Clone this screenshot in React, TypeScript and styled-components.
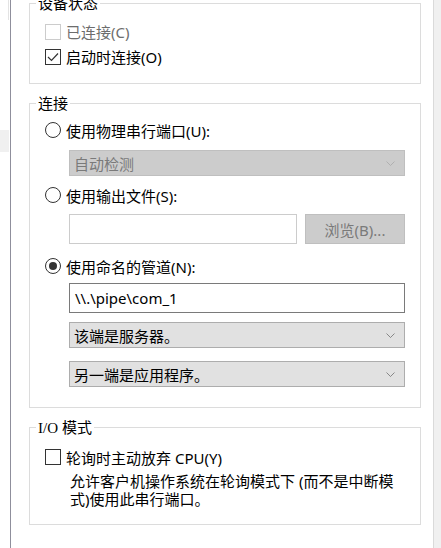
import styled, { createGlobalStyle } from "styled-components";

const GlobalStyle = createGlobalStyle`
  html, body {
    margin: 0;
    padding: 0;
    background: #ffffff;
  }
  body {
    font-family: "Noto Sans", "Noto Sans CJK SC", sans-serif;
    font-size: 15px;
    color: #000;
  }
`;

const Page = styled.div`
  display: flex;
  width: 441px;
  height: 548px;
  overflow: hidden;
`;

const LeftStrip = styled.div`
  width: 10px;
  display: flex;
  flex-direction: column;
`;

const StripLine = styled.div`
  width: 9px;
  height: 20px;
  border-right: 1px solid #e3e3e3;
  box-sizing: border-box;
`;

const StripTab = styled.div`
  width: 9px;
  height: 22px;
  margin-top: 110px;
  background: #f0f0f0;
`;

const Divider = styled.div`
  width: 1px;
  background: #8f8f9c;
`;

const Content = styled.div`
  flex: 1;
  padding-left: 18px;
  display: flex;
  flex-direction: column;
  gap: 9px;
`;

const RightEdge = styled.div`
  width: 7px;
  background: #f0f0f0;
  border-left: 1px solid #dadada;
`;

const Group = styled.fieldset<{ $first?: boolean }>`
  width: 392px;
  box-sizing: border-box;
  margin: ${(p) => (p.$first ? "-7px" : "0")} 0 0 0;
  padding: 0;
  border: 1px solid #dcdcdc;
  min-width: 0;
`;

const Legend = styled.legend`
  margin-left: 6px;
  padding: 0 2px;
  line-height: 20px;
  font-size: 15px;
`;

const Serif = styled.span`
  font-family: "Liberation Serif", serif;
`;

const GroupBody = styled.div<{ $top: number; $bottom: number }>`
  padding: ${(p) => p.$top}px 15px ${(p) => p.$bottom}px 15px;
  display: flex;
  flex-direction: column;
`;

const OptionRow = styled.label<{ $mt?: number; $h?: number; $disabled?: boolean }>`
  display: flex;
  align-items: center;
  gap: 5px;
  height: ${(p) => p.$h ?? 25}px;
  margin-top: ${(p) => p.$mt ?? 0}px;
  color: ${(p) => (p.$disabled ? "#6d6d6d" : "#000")};
  white-space: nowrap;
`;

const Box = styled.span<{ $disabled?: boolean }>`
  width: 16px;
  height: 16px;
  box-sizing: border-box;
  border: 1px solid ${(p) => (p.$disabled ? "#cccccc" : "#333333")};
  background: #fff;
  display: flex;
  align-items: center;
  justify-content: center;
  flex-shrink: 0;
`;

const Radio = styled.span<{ $on?: boolean }>`
  width: 16px;
  height: 16px;
  box-sizing: border-box;
  border: 1px solid #333333;
  border-radius: 50%;
  display: flex;
  align-items: center;
  justify-content: center;
  flex-shrink: 0;

  &::after {
    content: "";
    display: ${(p) => (p.$on ? "block" : "none")};
    width: 8px;
    height: 8px;
    border-radius: 50%;
    background: #333333;
  }
`;

const Indent = styled.div<{ $mt: number }>`
  margin-left: 24px;
  margin-top: ${(p) => p.$mt}px;
  display: flex;
  gap: 8px;
`;

const Select = styled.div<{ $disabled?: boolean }>`
  flex: 1;
  height: 26px;
  box-sizing: border-box;
  padding: 0 9px 0 4px;
  display: flex;
  align-items: center;
  justify-content: space-between;
  background: ${(p) => (p.$disabled ? "#cccccc" : "#e1e1e1")};
  border: 1px solid ${(p) => (p.$disabled ? "#bfbfbf" : "#adadad")};
  color: ${(p) => (p.$disabled ? "#7a7a7a" : "#000")};
`;

const TextField = styled.div<{ $active?: boolean; $w?: number }>`
  ${(p) => (p.$w ? `width: ${p.$w}px;` : "flex: 1;")}
  height: 30px;
  box-sizing: border-box;
  padding: 0 5px;
  display: flex;
  align-items: center;
  background: #fff;
  border: 1px solid ${(p) => (p.$active ? "#7a7a7a" : "#cccccc")};
`;

const Button = styled.div`
  flex: 1;
  height: 30px;
  box-sizing: border-box;
  display: flex;
  align-items: center;
  justify-content: center;
  background: #cccccc;
  border: 1px solid #bfbfbf;
  color: #7a7a7a;
`;

const Description = styled.p`
  margin: 3px 0 0 25px;
  width: 330px;
  line-height: 18px;
`;

function Chevron({ color }: { color: string }) {
  return (
    <svg width="9" height="5" viewBox="0 0 9 5">
      <path d="M0.5 0.5 L4.5 4.5 L8.5 0.5" fill="none" stroke={color} strokeWidth="0.8" />
    </svg>
  );
}

function Check() {
  return (
    <svg width="12" height="10" viewBox="0 0 12 10">
      <path d="M1 5 L4.5 8.5 L11 1.5" fill="none" stroke="#333" strokeWidth="1.2" />
    </svg>
  );
}

export default function App() {
  return (
    <>
      <GlobalStyle />
      <Page>
        <LeftStrip>
          <StripLine />
          <StripTab />
        </LeftStrip>
        <Divider />
        <Content>
          <Group $first>
            <Legend>设备状态</Legend>
            <GroupBody $top={6} $bottom={14}>
              <OptionRow $disabled>
                <Box $disabled />
                已连接(C)
              </OptionRow>
              <OptionRow>
                <Box>
                  <Check />
                </Box>
                启动时连接(O)
              </OptionRow>
            </GroupBody>
          </Group>

          <Group>
            <Legend>连接</Legend>
            <GroupBody $top={0} $bottom={20}>
              <OptionRow $mt={5} $h={24}>
                <Radio />
                使用物理串行端口(U):
              </OptionRow>
              <Indent $mt={8}>
                <Select $disabled>
                  自动检测
                  <Chevron color="#a8a8a8" />
                </Select>
              </Indent>
              <OptionRow $mt={7} $h={24}>
                <Radio />
                使用输出文件(S):
              </OptionRow>
              <Indent $mt={7}>
                <TextField $w={228} />
                <Button>浏览(B)...</Button>
              </Indent>
              <OptionRow $mt={10} $h={24}>
                <Radio $on />
                使用命名的管道(N):
              </OptionRow>
              <Indent $mt={5}>
                <TextField $active>\\.\pipe\com_1</TextField>
              </Indent>
              <Indent $mt={9}>
                <Select>
                  该端是服务器。
                  <Chevron color="#707070" />
                </Select>
              </Indent>
              <Indent $mt={13}>
                <Select>
                  另一端是应用程序。
                  <Chevron color="#707070" />
                </Select>
              </Indent>
            </GroupBody>
          </Group>

          <Group>
            <Legend>
              <Serif>I/O</Serif> 模式
            </Legend>
            <GroupBody $top={7} $bottom={16}>
              <OptionRow $h={24}>
                <Box />
                轮询时主动放弃 CPU(Y)
              </OptionRow>
              <Description>
                允许客户机操作系统在轮询模式下 (而不是中断模式)使用此串行端口。
              </Description>
            </GroupBody>
          </Group>
        </Content>
        <RightEdge />
      </Page>
    </>
  );
}
